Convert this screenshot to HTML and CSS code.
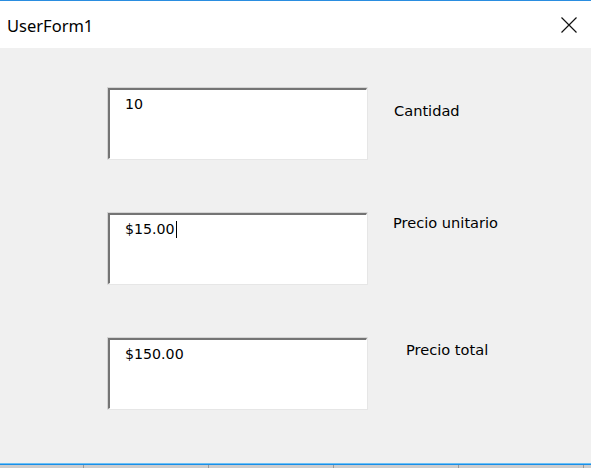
FILE: index.html
```
<!DOCTYPE html>
<html>
<head>
<meta charset="utf-8">
<link rel="stylesheet" href="styles.css">
</head>
<body>
<div class="window">
  <div class="titlebar">
    <span class="title">UserForm1</span>
    <svg class="close" width="16" height="16" viewBox="0 0 16 16"><path d="M0.5 0.5 L15.5 15.5 M15.5 0.5 L0.5 15.5" stroke="#111" stroke-width="1.2" fill="none"/></svg>
  </div>
  <div class="content">
    <div class="row">
      <div class="box"><div class="inner">10</div></div>
      <div class="label l1">Cantidad</div>
    </div>
    <div class="row">
      <div class="box"><div class="inner">$15.00<span class="caret"></span></div></div>
      <div class="label l2">Precio unitario</div>
    </div>
    <div class="row">
      <div class="box"><div class="inner">$150.00</div></div>
      <div class="label l3">Precio total</div>
    </div>
  </div>
  <div class="blueline"></div>
  <div class="strip">
    <div class="seg first"></div><div class="seg"></div><div class="seg"></div><div class="seg"></div><div class="seg"></div><div class="seg last"></div>
  </div>
</div>
</body>
</html>
```
FILE: styles.css
```
html, body { margin: 0; padding: 0; }
body { width: 591px; height: 468px; overflow: hidden; background: #f0f0f0; }
.window { display: flex; flex-direction: column; height: 468px; }
.titlebar {
  height: 47px; border-top: 1px solid #2a8de0; background: #fff;
  display: flex; align-items: center; justify-content: space-between;
  padding: 0 14px 0 7px; box-sizing: content-box;
}
.title { font-family: "Noto Sans", sans-serif; font-size: 16.5px; color: #000; margin-top: 1px; }
.close { display: block; }
.content { flex: 1; background: #f0f0f0; padding: 39px 0 0 107px; display: flex; flex-direction: column; gap: 52px; }
.row { display: flex; align-items: flex-start; }
.box {
  width: 261px; height: 73px; box-sizing: border-box;
  border-top: 1px solid #d4d4d4; border-left: 1px solid #d4d4d4;
  border-right: 1px solid #e6e6e6; border-bottom: 1px solid #e6e6e6;
  background: #fff;
}
.inner {
  height: 100%; box-sizing: border-box;
  border-top: 2px solid #747474; border-left: 2px solid #747474;
  border-right: 1px solid #fff; border-bottom: 1px solid #fff;
  padding: 6px 0 0 15px;
  font-family: "DejaVu Sans", sans-serif; font-size: 14.2px; line-height: 17px; color: #000;
}
.caret { display: inline-block; width: 0; height: 17px; border-left: 1px solid #000; vertical-align: top; margin-left: 1px; }
.label { font-family: "DejaVu Sans", sans-serif; font-size: 14.6px; line-height: 17px; color: #000; }
.l1 { margin: 15px 0 0 26px; }
.l2 { margin: 2px 0 0 25px; }
.l3 { margin: 4px 0 0 38px; }
.blueline { height: 2px; background: #1a8fe8; border-top: 1px solid #6cc0f5; box-sizing: border-box; }
.strip { height: 3px; background: #cdcdcd; display: flex; overflow: hidden; }
.seg { width: 125px; flex: none; border-left: 1px solid #9a9a9a; box-sizing: border-box; }
.seg.first { width: 83px; border-left: none; }
.seg.last { width: auto; flex: 1; }
```
